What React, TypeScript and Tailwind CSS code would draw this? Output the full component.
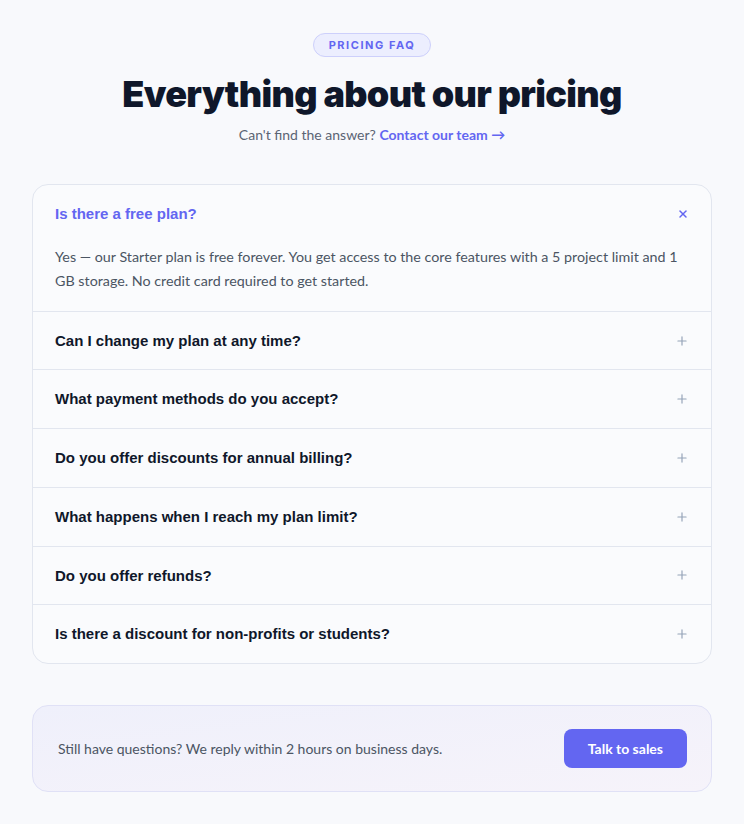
import React, { useState } from "react";
import { Plus, X } from "lucide-react";

const faqs = [
  {
    q: "Is there a free plan?",
    a: "Yes — our Starter plan is free forever. You get access to the core features with a 5 project limit and 1 GB storage. No credit card required to get started.",
  },
  {
    q: "Can I change my plan at any time?",
    a: "Absolutely. Upgrade or downgrade whenever you like and we'll prorate the difference on your next invoice.",
  },
  {
    q: "What payment methods do you accept?",
    a: "We accept all major credit cards, PayPal and bank transfer for annual plans.",
  },
  {
    q: "Do you offer discounts for annual billing?",
    a: "Yes, annual billing saves you two months compared to paying monthly.",
  },
  {
    q: "What happens when I reach my plan limit?",
    a: "We'll let you know ahead of time so you can upgrade or archive older projects.",
  },
  {
    q: "Do you offer refunds?",
    a: "We offer a full refund within 14 days of purchase, no questions asked.",
  },
  {
    q: "Is there a discount for non-profits or students?",
    a: "Yes — reach out to our team with proof of eligibility for 50% off any paid plan.",
  },
];

export default function App() {
  const [open, setOpen] = useState<number | null>(0);

  return (
    <div className="min-h-screen bg-[#f8f9fc] font-['Lato','Noto_Sans',sans-serif]">
      <div className="mx-auto w-[680px] pt-[33px] pb-8">
        <div className="flex flex-col items-center">
          <span className="rounded-full border border-[#cdd0fb] bg-[#eceefe] px-[15px] py-[3px] font-['Inter',sans-serif] text-[11px] font-bold leading-[16px] tracking-[0.14em] text-[#6366f1]">
            PRICING FAQ
          </span>
          <h1 className="mt-[15px] font-['Inter',sans-serif] text-[36px] font-black leading-[44px] tracking-[-0.018em] text-[#0f172a]">
            Everything about our pricing
          </h1>
          <p className="mt-[8px] text-[14px] leading-[21px] text-[#5b6474]">
            Can't find the answer?{" "}
            <a href="#" className="font-bold text-[#6366f1]">
              Contact our team →
            </a>
          </p>
        </div>

        <div className="mt-[39px] overflow-hidden rounded-2xl border border-[#e2e6ef] bg-[#fafbfd]">
          {faqs.map((item, i) => {
            const isOpen = open === i;
            return (
              <div key={item.q} className={i > 0 ? "border-t border-[#e2e6ef]" : ""}>
                <button
                  onClick={() => setOpen(isOpen ? null : i)}
                  className="flex w-full items-center justify-between px-[22px] py-5 text-left"
                >
                  <span
                    className={`font-['Liberation_Sans',Arial,sans-serif] text-[15px] font-bold leading-[17.7px] ${
                      isOpen ? "text-[#6366f1]" : "text-[#0f172a]"
                    }`}
                  >
                    {item.q}
                  </span>
                  {isOpen ? (
                    <X className="h-3 w-3 text-[#6366f1]" strokeWidth={3} />
                  ) : (
                    <Plus className="h-[14px] w-[14px] text-[#94a3b8]" strokeWidth={2} />
                  )}
                </button>
                {isOpen && (
                  <p className="pl-[22px] pr-[30px] pb-[18px] pt-[2px] text-[14.3px] leading-[24px] text-[#4b5563]">
                    {item.a}
                  </p>
                )}
              </div>
            );
          })}
        </div>

        <div className="mt-[41px] flex items-center justify-between rounded-2xl border border-[#e0e1f6] bg-gradient-to-br from-[#eff0fb] to-[#f6f3fa] py-[23px] pl-[25px] pr-6">
          <p className="text-[14px] text-[#4b5563]">
            Still have questions? We reply within 2 hours on business days.
          </p>
          <button className="h-[39px] rounded-lg bg-[#6366f1] px-[24px] text-[14px] font-bold text-white">
            Talk to sales
          </button>
        </div>
      </div>
    </div>
  );
}
